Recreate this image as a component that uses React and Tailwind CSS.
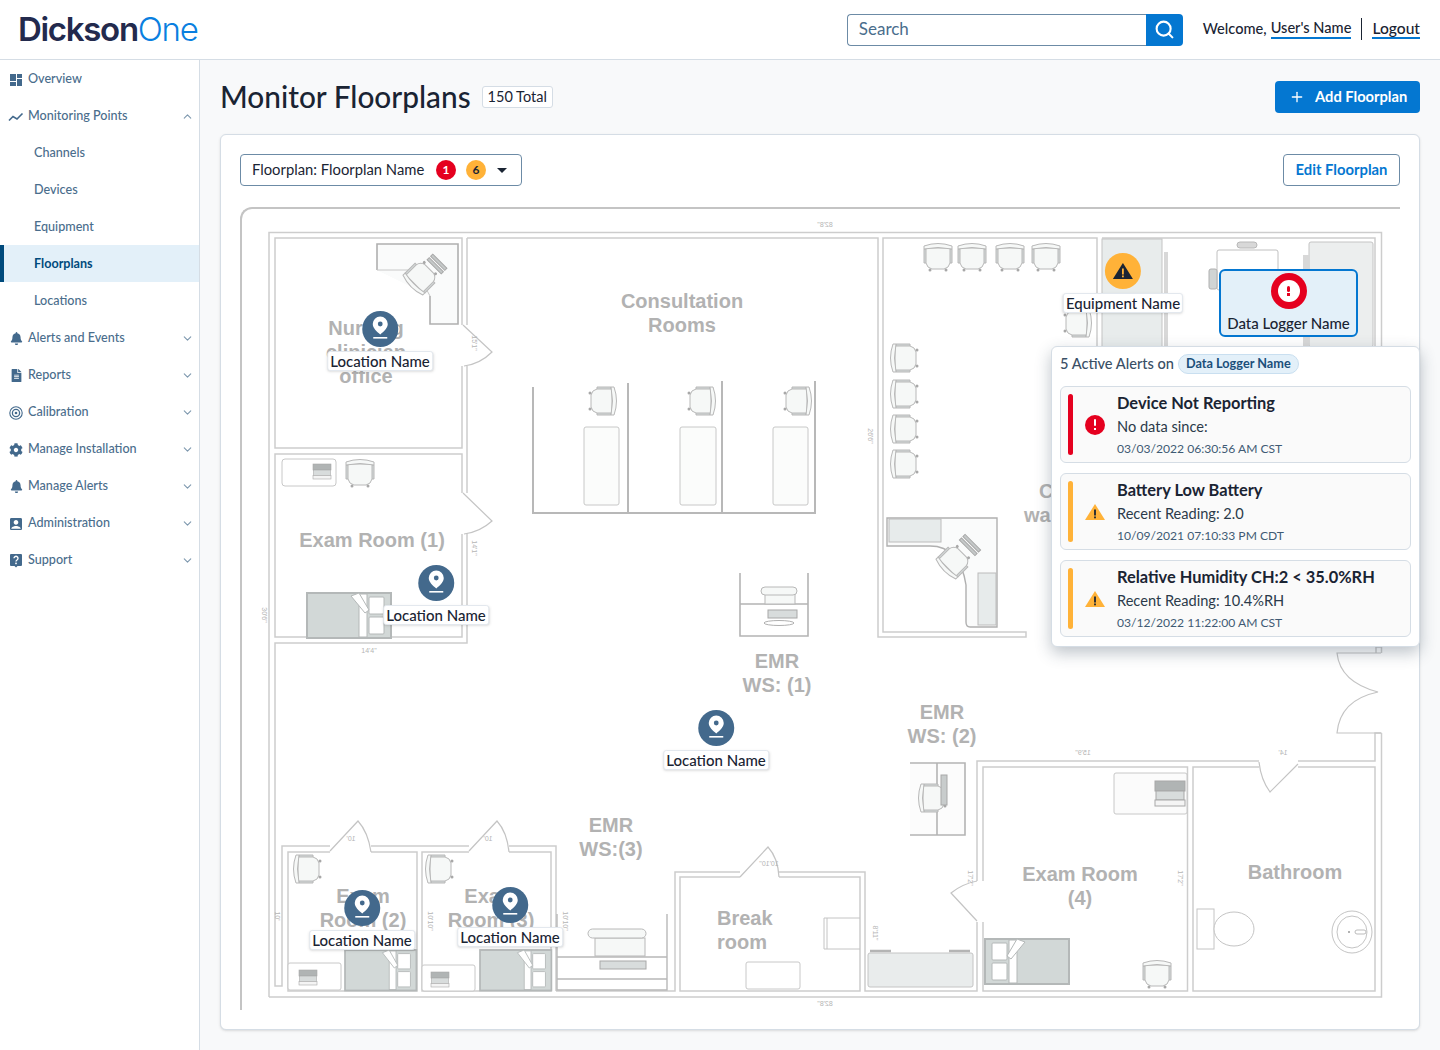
import React from 'react';
import { ChevronDown, ChevronUp, Search, Plus } from 'lucide-react';
import { FaBell, FaFileAlt, FaCog } from 'react-icons/fa';
import { MdAccountBox } from 'react-icons/md';

const MAP_X = 242;
const MAP_Y = 209;

const OverviewIcon = () => (
    <svg width="14" height="14" viewBox="0 0 14 14" fill="currentColor">
        <rect x="1" y="1" width="6" height="7" />
        <rect x="8" y="1" width="5" height="4" />
        <rect x="8" y="6" width="5" height="7" />
        <rect x="1" y="9" width="6" height="4" />
    </svg>
);

const PointsIcon = () => (
    <svg width="16" height="14" viewBox="0 0 16 14" fill="none" stroke="currentColor" strokeWidth="1.6">
        <path d="M1 10.5 L5 6.5 L9 9 L14.5 3.5" />
    </svg>
);

const CalibrationIcon = () => (
    <svg width="14" height="14" viewBox="0 0 14 14" fill="none" stroke="currentColor">
        <circle cx="7" cy="7" r="6.2" strokeWidth="1.1" />
        <circle cx="7" cy="7" r="3.6" strokeWidth="1.3" />
        <circle cx="7" cy="7" r="1.3" fill="currentColor" stroke="none" />
    </svg>
);

const SupportIcon = () => (
    <svg width="14" height="15" viewBox="0 0 14 15">
        <path d="M2 1 H12 a1 1 0 0 1 1 1 V12 a1 1 0 0 1 -1 1 H8.5 L7 14.5 L5.5 13 H2 a1 1 0 0 1 -1 -1 V2 a1 1 0 0 1 1 -1z" fill="currentColor" />
        <path d="M5 5.2 a2 2 0 1 1 3 1.8 c-.7 .4 -1 .8 -1 1.6" fill="none" stroke="#fff" strokeWidth="1.4" />
        <rect x="6.2" y="9.6" width="1.6" height="1.6" fill="#fff" />
    </svg>
);

const sideItems = [
    { label: 'Overview', icon: <OverviewIcon /> },
    { label: 'Monitoring Points', icon: <PointsIcon />, open: true },
    { label: 'Channels', sub: true },
    { label: 'Devices', sub: true },
    { label: 'Equipment', sub: true },
    { label: 'Floorplans', sub: true, active: true },
    { label: 'Locations', sub: true },
    { label: 'Alerts and Events', icon: <FaBell size={13} />, closed: true },
    { label: 'Reports', icon: <FaFileAlt size={13} />, closed: true },
    { label: 'Calibration', icon: <CalibrationIcon />, closed: true },
    { label: 'Manage Installation', icon: <FaCog size={14} />, closed: true },
    { label: 'Manage Alerts', icon: <FaBell size={13} />, closed: true },
    { label: 'Administration', icon: <MdAccountBox size={16} />, closed: true },
    { label: 'Support', icon: <SupportIcon />, closed: true },
];

const Sidebar = () => (
    <aside className="w-[200px] shrink-0 bg-white border-r border-[#d5dde5]">
        {sideItems.map((item) => (
            <div
                key={item.label}
                className={`h-[37px] flex items-center text-[12.6px] pt-[2px] ${item.active ? 'bg-[#e3f0f9] border-l-4 border-[#004a7c] text-[#004a7c] font-bold pl-[30px]' : 'text-[#4a6d8c] font-medium'} ${item.sub && !item.active ? 'pl-[34px]' : ''}`}
            >
                {item.icon && <span className="w-[28px] flex justify-center pl-[8px] pr-[4px] text-[#43698c]">{item.icon}</span>}
                <span>{item.label}</span>
                {item.open && <ChevronUp size={13} className="ml-auto mr-[5px] text-[#7e98ae]" />}
                {item.closed && <ChevronDown size={13} className="ml-auto mr-[5px] text-[#7e98ae]" />}
            </div>
        ))}
    </aside>
);

const Header = () => (
    <header className="h-[60px] bg-white border-b border-[#d5dde5] flex items-center pl-[18px] pr-[20px]">
        <div className="text-[33px] leading-none tracking-[-1.3px] font-[Inter,sans-serif]">
            <span className="font-semibold text-[#232a4d]">Dickson</span>
            <span className="font-light text-[#0a7fe0]">One</span>
        </div>
        <div className="ml-auto flex items-center">
            <div className="w-[336px] h-[32px] flex">
                <div className="flex-1 border border-r-0 border-[#6c8ba6] rounded-l-[4px] pl-[11px] pb-px flex items-center text-[17px] text-[#4a6d8c]">Search</div>
                <div className="w-[37px] bg-[#0477d1] rounded-r-[4px] flex items-center justify-center text-white">
                    <Search size={21} strokeWidth={2.4} />
                </div>
            </div>
            <div className="ml-[20px] flex items-center text-[14.6px] font-medium text-[#1a2433] pb-px">
                <span className="mr-[4px]">Welcome,</span>
                <span className="border-b-2 border-[#0477d1] leading-[18px]">User's Name</span>
                <span className="w-px h-[22px] bg-[#1a2433] mx-[10px]"></span>
                <span className="border-b-2 border-[#0477d1] leading-[18px] text-[15.6px]">Logout</span>
            </div>
        </div>
    </header>
);

const Chair = ({ x, y, r = 0 }) => (
    <g transform={`translate(${x} ${y}) rotate(${r})`} fill="#f6f8f7" stroke="#b8b8b8">
        <path d="M-14 -7 V7 H-11 V-7z M11 -7 V7 H14 V-7z" fill="#d3d8d8" />
        <path d="M-12 -8 V7 Q-11 12 -6 13 H6 Q11 12 12 7 V-8z" />
        <path d="M-14 -10 Q0 -15 14 -10 V-7 Q0 -10 -14 -7z" />
        <circle cx="-8" cy="14" r="1.5" fill="#a8a8a8" stroke="none" />
        <circle cx="8" cy="14" r="1.5" fill="#a8a8a8" stroke="none" />
    </g>
);

const Laptop = ({ x, y, w = 30 }) => (
    <g transform={`translate(${x} ${y}) scale(${w / 30})`} stroke="#a8a8a8" fill="#f4f4f4">
        <rect x="0" y="0" width="30" height="10" fill="#b0b4b4" />
        <rect x="1" y="10" width="28" height="9" fill="#d8dcdc" />
        <rect x="0" y="19" width="30" height="6" />
    </g>
);

const Bed = ({ x, y, scaleX = 1, scaleY = 1, flip }) => (
    <g transform={`translate(${x} ${y}) scale(${scaleX} ${scaleY})${flip ? ' scale(-1 1) translate(-84 0)' : ''}`} stroke="#b4b8b8">
        <rect x="0" y="0" width="84" height="45" fill="#d2d8d7" strokeWidth="2" />
        <rect x="52" y="1" width="8" height="43" fill="#fff" />
        <rect x="62" y="4" width="15" height="17" rx="1" fill="#fff" />
        <rect x="62" y="24" width="15" height="17" rx="1" fill="#fff" />
        <path d="M44 3 L52 0 L62 17 L58 20z" fill="#fff" />
    </g>
);

const RoomLabel = ({ x, y, lines, anchor = 'middle' }) => (
    <text fontFamily="'Liberation Sans', sans-serif" fontWeight="700" fontSize="20" fill="#b2b2b2" textAnchor={anchor}>
        {lines.map((line, i) => (
            <tspan key={line} x={x} y={y + i * 24}>{line}</tspan>
        ))}
    </text>
);

const Dim = ({ x, y, r = 0, mirror, children }) => (
    <text
        transform={`translate(${x} ${y}) rotate(${r})${mirror ? ' scale(-1 1)' : ''}`}
        fontFamily="'Liberation Sans', sans-serif"
        fontSize="7"
        fill="#b5b5b5"
        textAnchor="middle"
    >
        {children}
    </text>
);

const FloorplanDrawing = () => (
    <svg className="block" width="1158" height="801" viewBox={`${MAP_X} ${MAP_Y} 1158 801`} fill="none">
        {/* walls */}
        <g stroke="#cdcdcd" strokeWidth="1.5">
            <path d="M269 997 V232.5 H1381.5 V346 M1381.5 733 V997 H269" />
            <path d="M462 325 V238 H275 V448 H462 V366" />
            <path d="M467 238 V325 M467 366 V493 M467 533 V643 H275 V986 H282 V846 H330 M371 846 H469 M509 846 H556 V991" />
            <path d="M462 493 V454 H275 V637 H462 V534" />
            <path d="M467 238 H878 V637 H1026 V632 H883 V238 H1097 V346 M1102 238 H1375 V346" />
            <path d="M330 852 H288 V991 H417 V852 H371 M469 852 H422 V991 H551 V852 H509" />
            <path d="M556 991 H675 V872 H740 M779 872 H865 V991 H977 V922 M740 877 H680 V991 H860 V877 H779" />
            <path d="M977 881 V761 H1259 M1298 761 H1375 V733 H1381.5 M983 922 V991 H1187.5 V767 H983 V881" />
            <path d="M1259 767 H1193 V991 H1375 V767 H1298 M1381.5 653 V647 H1376 V653" />
        </g>
        {/* doors */}
        <g stroke="#c4c4c4" strokeWidth="1.2">
            <path d="M463 325 L492 352 Q480 364 464 366" />
            <path d="M463 493 L492 521 Q480 532 464 534" />
            <path d="M330 851 L358 821 Q368 832 371 852 M469 851 L497 821 Q507 832 509 852" />
            <path d="M740 877 L768 847 Q778 858 779 877" />
            <path d="M977 881 Q962 884 951 893 L977 921" />
            <path d="M1259 762 Q1261 780 1270 792 L1298 764" />
            <path d="M1381 653 H1337 Q1340 682 1378 692 Q1340 700 1337 733 H1381" />
        </g>
        {/* nurse desk */}
        <path d="M377 270 V244 H458 V324 H430 V296" stroke="#b0b0b0" strokeWidth="1.6" fill="#fafbfb" />
        <path d="M377 270 H416 L430 296" stroke="#c8c8c8" fill="#fafbfb" />
        <g transform="translate(437 264) rotate(45)" fill="#c4c8c8" stroke="#a8a8a8">
            <rect x="-10" y="-4" width="20" height="3" />
            <rect x="-10" y="1" width="20" height="3" />
        </g>
        <Chair x={420} y={278} r={-135} />
        {/* exam room 1 */}
        <rect x="282" y="459" width="54" height="27" rx="3" stroke="#c8c8c8" />
        <Laptop x={313} y={464} w={18} />
        <Chair x={360} y={472} />
        <Bed x={307} y={593} />
        {/* consultation cubicles */}
        <path d="M533 387 V513 H627 M628 383 V513 H722 V381 M722 513 H815 V381" stroke="#b8b8b8" strokeWidth="2" />
        <g stroke="#c8c8c8" fill="#fbfcfb">
            <rect x="584" y="427" width="35" height="78" rx="2" />
            <rect x="680" y="427" width="36" height="78" rx="2" />
            <rect x="773" y="427" width="35" height="78" rx="2" />
        </g>
        <Chair x={604} y={401} r={90} />
        <Chair x={703} y={401} r={90} />
        <Chair x={799} y={401} r={90} />
        {/* EMR 1 */}
        <path d="M740 573 V636 H808 V573 M740 604 H808" stroke="#b4b4b4" strokeWidth="1.6" />
        <rect x="765" y="592" width="30" height="12" fill="#f6f8f7" stroke="#b8b8b8" />
        <rect x="761" y="587" width="36" height="8" rx="4" fill="#f6f8f7" stroke="#b8b8b8" />
        <rect x="768" y="610" width="29" height="8" fill="#d8dcdc" stroke="#a8a8a8" />
        <ellipse cx="779" cy="623" rx="15" ry="2.5" fill="#fff" stroke="#b0b0b0" />
        {/* waiting chairs */}
        {[938, 972, 1010, 1046].map((x) => <Chair key={x} x={x} y={256} />)}
        {[358, 394, 429, 464].map((y) => <Chair key={y} x={903} y={y} r={-90} />)}
        {/* reception */}
        <path d="M887 518 H997 V627 H970 Q966 627 966 622 V585 Q960 546 930 546 H887z" stroke="#b0b0b0" strokeWidth="1.4" fill="#fafbfb" />
        <rect x="889" y="519" width="52" height="23" fill="#e7ebeb" stroke="#bcbcbc" />
        <rect x="978" y="573" width="18" height="52" fill="#e7ebeb" stroke="#bcbcbc" />
        <g transform="translate(970 545) rotate(45)" fill="#c4c8c8" stroke="#a8a8a8">
            <rect x="-11" y="-4" width="22" height="3" />
            <rect x="-11" y="1" width="22" height="3" />
        </g>
        <Chair x={953} y={562} r={-135} />
        {/* top right storage and desk */}
        <rect x="1102" y="239" width="60" height="108" fill="#e8ecec" stroke="#c4c4c4" />
        <rect x="1164" y="252" width="4" height="95" fill="#d8d8d8" />
        <rect x="1309" y="242" width="64" height="105" rx="2" fill="#eceeee" stroke="#c4c4c4" />
        <rect x="1303" y="255" width="6" height="92" fill="#d8d8d8" />
        <rect x="1217" y="250" width="61" height="40" rx="2" fill="#fff" stroke="#c0c0c0" />
        <rect x="1237" y="242" width="20" height="6" rx="3" fill="#d8d8d8" stroke="#b8b8b8" />
        <rect x="1209" y="269" width="8" height="20" rx="2" fill="#d0d4d4" stroke="#b0b0b0" />
        <Chair x={1079} y={323} r={90} />
        {/* EMR 2 */}
        <path d="M910 763 H965 V835 H910 M937 763 V835" stroke="#b4b4b4" strokeWidth="1.6" fill="#fcfcfc" />
        <Chair x={931} y={798} r={-90} />
        <rect x="941" y="775" width="6" height="30" fill="#c8cccc" stroke="#a8a8a8" />
        {/* exam rooms 2 and 3 */}
        <Chair x={306} y={869} r={-90} />
        <Chair x={438} y={869} r={-90} />
        <rect x="288" y="963" width="53" height="27" rx="2" stroke="#c8c8c8" fill="#fff" />
        <rect x="422" y="965" width="53" height="26" rx="2" stroke="#c8c8c8" fill="#fff" />
        <Laptop x={299} y={970} w={18} />
        <Laptop x={431} y={972} w={18} />
        <Bed x={345} y={950} scaleX={0.85} scaleY={0.9} />
        <Bed x={480} y={950} scaleX={0.85} scaleY={0.9} />
        {/* EMR 3 */}
        <path d="M557 914 V990 H667 V914 M557 979 H667 M557 957 H667" stroke="#b8b8b8" strokeWidth="1.4" />
        <rect x="595" y="938" width="50" height="18" fill="#f6f8f7" stroke="#b8b8b8" />
        <rect x="588" y="929" width="58" height="9" rx="4.5" fill="#f6f8f7" stroke="#b8b8b8" />
        <rect x="600" y="961" width="46" height="8" fill="#d8dcdc" stroke="#a8a8a8" />
        {/* break room */}
        <rect x="746" y="962" width="54" height="27" rx="2" stroke="#c8c8c8" />
        <path d="M860 918 H824 V949 H860 M827 918 V949" stroke="#c4c4c4" />
        <rect x="868" y="953" width="105" height="34" rx="2" fill="#e9ecec" stroke="#c4c4c4" />
        <path d="M870 951 H891 M949 951 H970" stroke="#b4b4b4" strokeWidth="2.5" />
        {/* exam room 4 and bathroom */}
        <rect x="1114" y="773" width="73" height="41" rx="2" fill="#fbfbfb" stroke="#c8c8c8" />
        <Laptop x={1155} y={781} w={30} />
        <Bed x={985} y={939} flip />
        <Chair x={1157} y={973} />
        <rect x="1197" y="909" width="17" height="40" fill="#fff" stroke="#c4c4c4" />
        <ellipse cx="1234" cy="929" rx="20" ry="17" fill="#fff" stroke="#c4c4c4" />
        <ellipse cx="1352" cy="932" rx="20" ry="21" stroke="#c4c4c4" fill="#fff" />
        <ellipse cx="1352" cy="932" rx="15" ry="16" stroke="#c4c4c4" />
        <circle cx="1349" cy="932" r="1" fill="#999" />
        <rect x="1355" y="930" width="11" height="4" rx="2" stroke="#bbb" />
        {/* room names */}
        <RoomLabel x={682} y={308} lines={['Consultation', 'Rooms']} />
        <RoomLabel x={366} y={335} lines={['Nursing', 'clinician', 'office']} />
        <RoomLabel x={372} y={547} lines={['Exam Room (1)']} />
        <RoomLabel x={777} y={668} lines={['EMR', 'WS: (1)']} />
        <RoomLabel x={942} y={719} lines={['EMR', 'WS: (2)']} />
        <RoomLabel x={611} y={832} lines={['EMR', 'WS:(3)']} />
        <RoomLabel x={717} y={925} lines={['Break', 'room']} anchor="start" />
        <RoomLabel x={1080} y={881} lines={['Exam Room', '(4)']} />
        <RoomLabel x={1295} y={879} lines={['Bathroom']} />
        <RoomLabel x={363} y={903} lines={['Exam', 'Room (2)']} />
        <RoomLabel x={491} y={903} lines={['Exam', 'Room (3)']} />
        <RoomLabel x={1039} y={498} lines={['Clinic']} anchor="start" />
        <RoomLabel x={1024} y={522} lines={['waiting']} anchor="start" />
        {/* dimensions */}
        <Dim x={825} y={227} mirror>82'8"</Dim>
        <Dim x={825} y={1006} mirror>82'8"</Dim>
        <Dim x={369} y={653}>14'4"</Dim>
        <Dim x={262} y={615} r={90}>30'6"</Dim>
        <Dim x={472} y={548} r={90}>14'1"</Dim>
        <Dim x={472} y={343} r={90}>15'1"</Dim>
        <Dim x={868} y={436} r={90}>26'6"</Dim>
        <Dim x={1083} y={755} mirror>15'9"</Dim>
        <Dim x={1283} y={755} mirror>14'</Dim>
        <Dim x={1178} y={878} r={90}>17'2"</Dim>
        <Dim x={968} y={878} r={90}>17'2"</Dim>
        <Dim x={351} y={841} mirror>10'</Dim>
        <Dim x={488} y={841} mirror>10'</Dim>
        <Dim x={275} y={916} r={90}>10'</Dim>
        <Dim x={428} y={921} r={90}>10'10"</Dim>
        <Dim x={563} y={921} r={90}>10'10"</Dim>
        <Dim x={769} y={866} mirror>10'10"</Dim>
        <Dim x={873} y={933} r={90}>8'11"</Dim>
    </svg>
);

const PinIcon = () => (
    <svg width="36" height="36" viewBox="0 0 36 36">
        <path d="M18 5.5 a7.5 7.5 0 0 1 7.5 7.5 c0 4 -4 7.5 -7.5 10.5 c-3.5 -3 -7.5 -6.5 -7.5 -10.5 a7.5 7.5 0 0 1 7.5 -7.5z" fill="#fff" />
        <circle cx="18" cy="13" r="2.4" fill="#43698c" />
        <rect x="11" y="26" width="14" height="1.6" fill="#fff" />
    </svg>
);

const MarkerLabel = ({ children }) => (
    <div className="mt-[4px] bg-white border border-[#e3e8ee] rounded-[3px] shadow-sm px-[2px] text-[15px] leading-[18px] font-medium text-[#1a2433] whitespace-nowrap">
        {children}
    </div>
);

const LocationPin = ({ x, y, label }) => (
    <div className="absolute -translate-x-1/2 flex flex-col items-center" style={{ left: x - MAP_X, top: y - MAP_Y - 18 }}>
        <div className="w-[36px] h-[36px] rounded-full bg-[#43698c]">
            <PinIcon />
        </div>
        <MarkerLabel>{label}</MarkerLabel>
    </div>
);

const pins = [
    { x: 380, y: 329 },
    { x: 436, y: 583 },
    { x: 716, y: 728 },
    { x: 362, y: 908 },
    { x: 510, y: 905 },
];

const WarnIcon = ({ color = '#ffb238', mark = '#1a2433', size = 20 }) => (
    <svg width={size} height={size} viewBox="0 0 20 20">
        <path d="M10 2 L20 18 H0z" fill={color} />
        <rect x="9.1" y="7.5" width="1.8" height="6" fill={mark} />
        <rect x="9.1" y="14.5" width="1.8" height="1.8" fill={mark} />
    </svg>
);

const ErrorIcon = () => (
    <div className="w-[20px] h-[20px] rounded-full bg-[#e5001f] flex flex-col items-center justify-center gap-[2px]">
        <span className="w-[2.5px] h-[7px] bg-white rounded-sm"></span>
        <span className="w-[2.5px] h-[2.5px] bg-white"></span>
    </div>
);

const alerts = [
    { title: 'Device Not Reporting', body: 'No data since:', date: '03/03/2022 06:30:56 AM CST', level: 'error' },
    { title: 'Battery Low Battery', body: 'Recent Reading: 2.0', date: '10/09/2021 07:10:33 PM CDT', level: 'warn' },
    { title: 'Relative Humidity CH:2 < 35.0%RH', body: 'Recent Reading: 10.4%RH', date: '03/12/2022 11:22:00 AM CST', level: 'warn' },
];

const AlertsPopover = () => (
    <div className="absolute left-[809px] top-[137px] w-[369px] bg-white border border-[#d5dde5] rounded-[6px] shadow-[0_6px_16px_rgba(40,60,80,0.3)] px-[8px] pt-[7px] pb-[9px]">
        <div className="h-[20px] flex items-center text-[14.6px] font-medium text-[#3a4f66]">
            <span>5 Active Alerts on</span>
            <span className="ml-[4px] h-[20px] flex items-center px-[7px] rounded-full bg-[#e3f0f9] border border-[#c9dff0] text-[12.7px] font-bold text-[#1b4f7a]">Data Logger Name</span>
        </div>
        <div className="mt-[12px] flex flex-col gap-[10px]">
            {alerts.map((alert) => (
                <div key={alert.title} className="h-[77px] bg-[#fafafa] border border-[#d5dde5] rounded-[6px] flex items-center pl-[7px]">
                    <span className={`w-[5px] h-[61px] rounded-full ${alert.level === 'error' ? 'bg-[#e5001f]' : 'bg-[#ffb238]'}`}></span>
                    <span className="w-[44px] flex justify-center">
                        {alert.level === 'error' ? <ErrorIcon /> : <WarnIcon />}
                    </span>
                    <div>
                        <div className="text-[16.4px] leading-[20px] font-bold text-[#1a2433]">{alert.title}</div>
                        <div className="text-[14.6px] leading-[18px] mt-[5px] text-[#2b3a4a]">{alert.body}</div>
                        <div className="text-[12.1px] leading-[16px] mt-[5px] text-[#3f5a74]">{alert.date}</div>
                    </div>
                </div>
            ))}
        </div>
    </div>
);

const FloorplanMap = () => (
    <div className="relative mt-[21px] w-[1160px] h-[803px] border-t-2 border-l-2 border-[#c4c4c4] rounded-tl-xl">
        <FloorplanDrawing />
        {pins.map((pin) => (
            <LocationPin key={pin.x} x={pin.x} y={pin.y} label="Location Name" />
        ))}
        {/* equipment marker */}
        <div className="absolute -translate-x-1/2 left-[881px] top-[44px] flex flex-col items-center">
            <div className="w-[36px] h-[36px] rounded-full bg-[#ffb238] flex items-center justify-center">
                <WarnIcon color="#1a2433" mark="#ffb238" size={20} />
            </div>
            <MarkerLabel>Equipment Name</MarkerLabel>
        </div>
        {/* data logger marker */}
        <div className="absolute left-[977px] top-[60px] w-[139px] h-[68px] bg-[#e3f0f9] border-2 border-[#0477d1] rounded-[6px] flex flex-col items-center pt-[2px]">
            <div className="w-[36px] h-[36px] rounded-full bg-[#e5001f] flex items-center justify-center">
                <div className="w-[22px] h-[22px] rounded-full bg-white flex flex-col items-center justify-center gap-[1px]">
                    <span className="w-[2.5px] h-[6px] bg-[#e5001f] rounded-sm"></span>
                    <span className="w-[2.5px] h-[2.5px] bg-[#e5001f]"></span>
                </div>
            </div>
            <div className="mt-[5px] text-[15px] leading-[18px] font-medium text-[#1a2433]">Data Logger Name</div>
        </div>
        <AlertsPopover />
    </div>
);

export default function App() {
    return (
        <div className="w-[1440px] h-[1050px] overflow-hidden flex flex-col bg-[#f8f9fa] font-[Lato,sans-serif]">
            <Header />
            <div className="flex flex-1 min-h-0">
                <Sidebar />
                <main className="flex-1 px-[20px] pt-[21px]">
                    <div className="h-[32px] flex items-center">
                        <h1 className="text-[29.8px] leading-none font-medium text-[#1a2433] pb-px">Monitor Floorplans</h1>
                        <span className="ml-[11px] h-[22px] flex items-center px-[5px] pb-px bg-white border border-[#d5dde5] rounded-[3px] text-[14.5px] text-[#1a2433]">150 Total</span>
                        <button className="ml-auto w-[145px] h-[32px] bg-[#0477d1] rounded-[4px] flex items-center pl-[14px] pb-px text-white text-[14.7px] font-bold">
                            <Plus size={16} />
                            <span className="ml-[10px]">Add Floorplan</span>
                        </button>
                    </div>
                    <section className="mt-[21px] h-[896px] bg-white border border-[#d5dde5] rounded-[6px] shadow-sm px-[19px] pt-[19px]">
                        <div className="flex items-center justify-between">
                            <div className="w-[282px] h-[32px] border border-[#6c8ba6] rounded-[4px] flex items-center pl-[11px] text-[14.8px] text-[#1a2433]">
                                <span className="pb-[2px]">Floorplan: Floorplan Name</span>
                                <span className="ml-auto w-[20px] h-[20px] rounded-full bg-[#e5001f] text-white text-[12px] font-bold flex items-center justify-center">1</span>
                                <span className="ml-[10px] w-[20px] h-[20px] rounded-full bg-[#ffb238] text-[#1a2433] text-[12px] font-bold flex items-center justify-center">6</span>
                                <span className="ml-[11px] mr-[14px] w-0 h-0 border-l-[5px] border-r-[5px] border-t-[5px] border-l-transparent border-r-transparent border-t-[#1a2433]"></span>
                            </div>
                            <button className="w-[117px] h-[32px] pb-[2px] bg-white border border-[#6c8ba6] rounded-[4px] text-[14.8px] font-bold text-[#0477d1]">Edit Floorplan</button>
                        </div>
                        <FloorplanMap />
                    </section>
                </main>
            </div>
        </div>
    );
}
